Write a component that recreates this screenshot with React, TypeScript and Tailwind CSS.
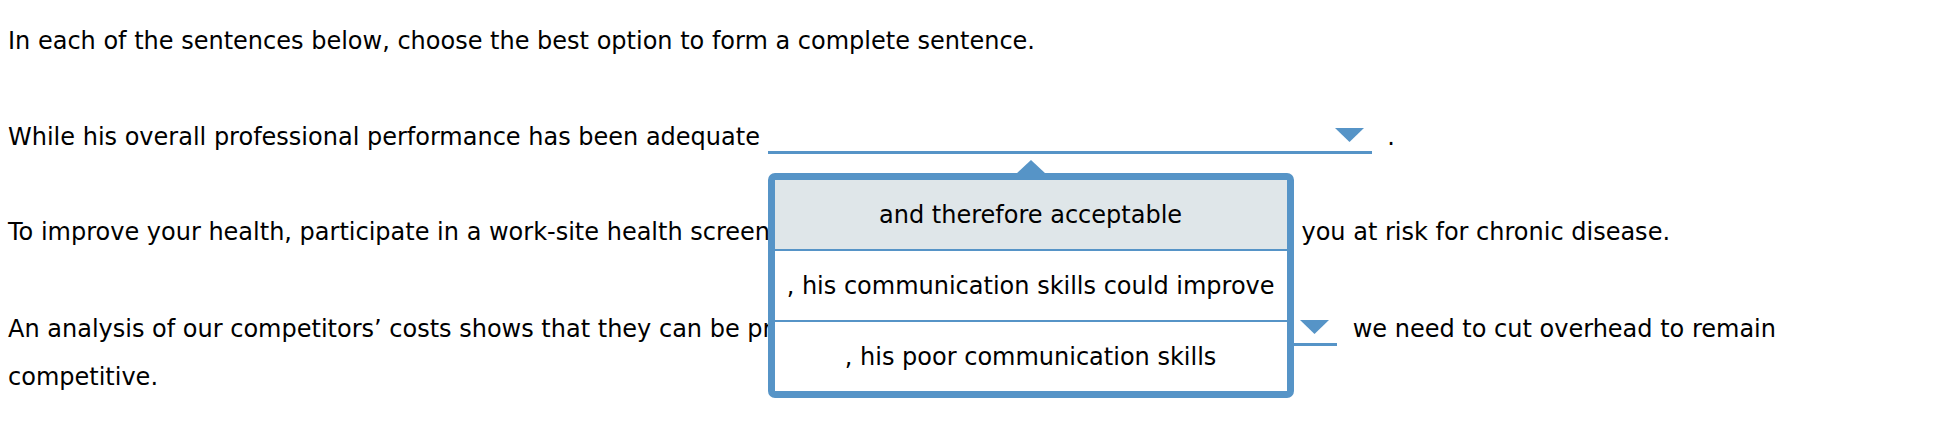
import React from "react";

const BLUE = "#5694c7";

type Option = { label: string; active?: boolean };

const options: Option[] = [
  { label: "and therefore acceptable", active: true },
  { label: ", his communication skills could improve" },
  { label: ", his poor communication skills" },
];

// little down-pointing caret used by every blank
const Caret = () => (
  <svg width="29" height="14" viewBox="0 0 29 14" className="block">
    <polygon points="0,0 29,0 14.5,14" fill={BLUE} />
  </svg>
);

const Blank = ({
  width,
  open = false,
}: {
  width: number;
  open?: boolean;
}) => {
  return (
    <span
      className="relative inline-block h-[30px] mb-[-9px] mr-[8px] border-b-[3px] border-[#5694c7] align-baseline"
      style={{ width }}
    >
      <span className="absolute right-[8px] top-[4px]">
        <Caret />
      </span>
      {open && (
        <span className="absolute left-0 top-[49px] z-10 block w-[526px]">
          <svg
            width="30"
            height="14"
            viewBox="0 0 30 14"
            className="absolute left-[248px] top-[-13px] block"
          >
            <polygon points="0,14 15,0 30,14" fill={BLUE} />
          </svg>
          <span className="block overflow-hidden rounded-[7px] border-[7px] border-[#5694c7] bg-white">
            {options.map((o, i) => (
              <span
                key={o.label}
                className={
                  "flex items-center justify-center whitespace-nowrap leading-none " +
                  (o.active ? "bg-[#dfe6e9] " : "bg-white ") +
                  (i > 0
                    ? "h-[71px] border-t-2 border-[#5694c7]"
                    : "h-[69px]")
                }
              >
                {o.label}
              </span>
            ))}
          </span>
        </span>
      )}
    </span>
  );
};

export default function App() {
  return (
    <div className="min-h-[436px] w-[1944px] bg-white px-2 pt-[17px] font-['DejaVu_Sans',sans-serif] text-[24px] leading-[48px] text-black">
      <div className="w-[1900px]">
        <p>
          In each of the sentences below, choose the best option to form a
          complete sentence.
        </p>

        <p className="mt-[48px]">
          While his overall professional performance has been adequate{" "}
          <Blank width={604} open /> .
        </p>

        <p className="mt-[47px]">
          To improve your health, participate in a work-site health screening{" "}
          <Blank width={471} /> you at risk for chronic disease.
        </p>

        <p className="mt-[49px]">
          An analysis of our competitors’ costs shows that they can be
          profitable <Blank width={467} /> we need to cut overhead to remain
          competitive.
        </p>
      </div>
    </div>
  );
}
